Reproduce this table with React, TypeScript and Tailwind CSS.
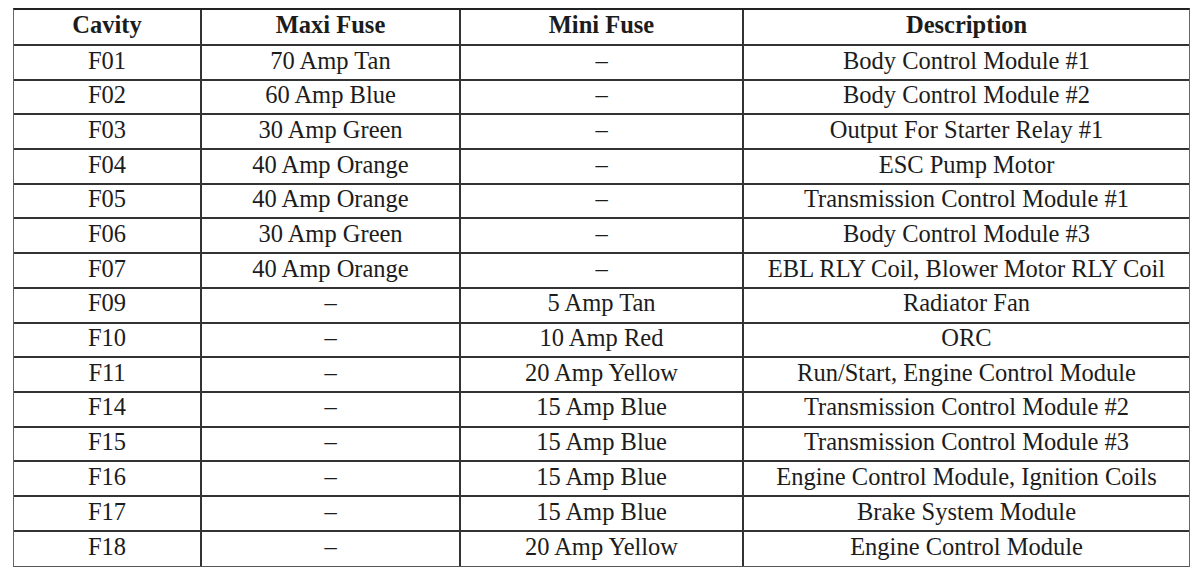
const rows: [string, string, string, string][] = [
  ['F01', '70 Amp Tan', '–', 'Body Control Module #1'],
  ['F02', '60 Amp Blue', '–', 'Body Control Module #2'],
  ['F03', '30 Amp Green', '–', 'Output For Starter Relay #1'],
  ['F04', '40 Amp Orange', '–', 'ESC Pump Motor'],
  ['F05', '40 Amp Orange', '–', 'Transmission Control Module #1'],
  ['F06', '30 Amp Green', '–', 'Body Control Module #3'],
  ['F07', '40 Amp Orange', '–', 'EBL RLY Coil, Blower Motor RLY Coil'],
  ['F09', '–', '5 Amp Tan', 'Radiator Fan'],
  ['F10', '–', '10 Amp Red', 'ORC'],
  ['F11', '–', '20 Amp Yellow', 'Run/Start, Engine Control Module'],
  ['F14', '–', '15 Amp Blue', 'Transmission Control Module #2'],
  ['F15', '–', '15 Amp Blue', 'Transmission Control Module #3'],
  ['F16', '–', '15 Amp Blue', 'Engine Control Module, Ignition Coils'],
  ['F17', '–', '15 Amp Blue', 'Brake System Module'],
  ['F18', '–', '20 Amp Yellow', 'Engine Control Module'],
]

const cols = 'grid grid-cols-[186px_259px_283px_447px]'
const cell = 'flex items-center justify-center pb-[3px] border-l-2 border-[#333] first:border-l-0'

export default function App() {
  return (
    <div className="w-[1200px] h-[577px] bg-white pt-2 pl-[13px] font-['Liberation_Serif',serif] text-[24.5px] leading-none text-[#1c1c1c]">
      <div className="w-[1177px] border-t-2 border-t-[#222] border-x border-x-[#666] border-b border-b-[#555]">
        <div className={`${cols} h-[36px] font-bold border-b-2 border-[#333]`}>
          <div className={cell}>Cavity</div>
          <div className={cell}>Maxi Fuse</div>
          <div className={cell}>Mini Fuse</div>
          <div className={cell}>Description</div>
        </div>
        {rows.map((r, i) => (
          <div
            key={r[0]}
            className={`${cols} h-[34.7px] ${i < rows.length - 1 ? 'border-b-2 border-[#333]' : ''}`}
          >
            {r.map((t, j) => (
              <div key={j} className={cell}>{t}</div>
            ))}
          </div>
        ))}
      </div>
    </div>
  )
}
